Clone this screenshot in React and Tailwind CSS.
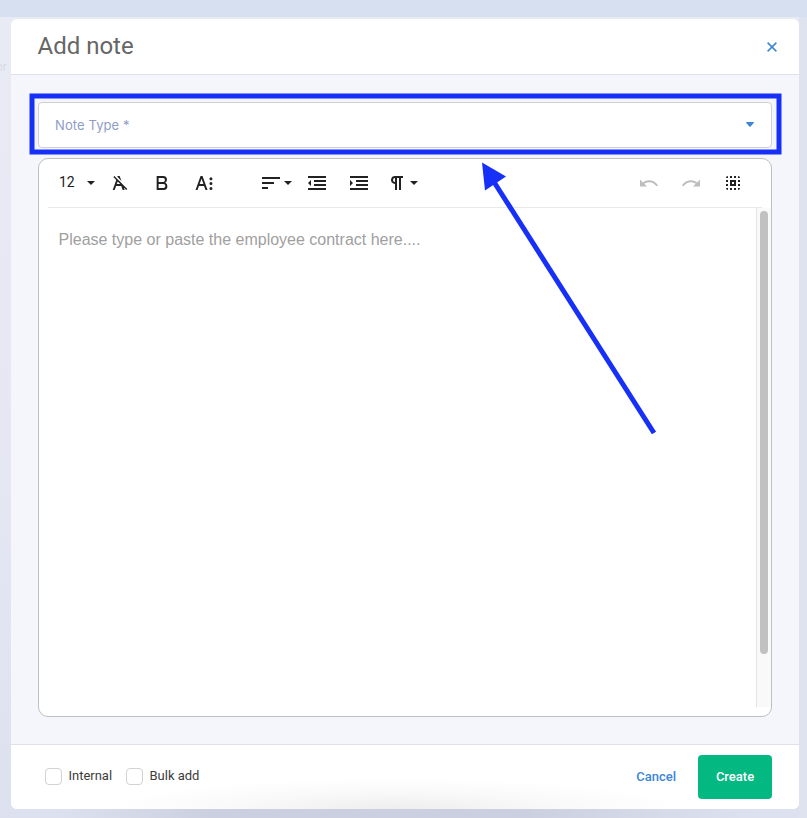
const ICONS = {
  clear: "M11.48,10.09l-1.2-1.21L8.8,7.41,6.43,5,5.37,6.1,8.25,9,4.66,19h2l1.43-4h5.14l1.43,4h2l-.89-2.51L18.27,19l1.07-1.06L14.59,13.2ZM8.8,13l.92-2.56L12.27,13Zm.56-7.15L9.66,5h2l1.75,4.9Z",
  bold: "M15.25,11.8h0A3.68,3.68,0,0,0,17,9a3.93,3.93,0,0,0-3.86-4H6.65V19h7a3.74,3.74,0,0,0,3.7-3.78V15.1A3.64,3.64,0,0,0,15.25,11.8ZM8.65,7h4.2a2.09,2.09,0,0,1,2,1.3,2.09,2.09,0,0,1-1.37,2.61,2.23,2.23,0,0,1-.63.09H8.65Zm4.6,10H8.65V13h4.6a2.09,2.09,0,0,1,2,1.3,2.09,2.09,0,0,1-1.37,2.61A2.23,2.23,0,0,1,13.25,17Z",
  more: "M13.55,19h2l-5-14h-2l-5,14h2l1.4-4h5.1Zm-5.9-6,1.9-5.2L11.45,13Zm12.8,4.5a1.5,1.5,0,1,1-1.5-1.5A1.5,1.5,0,0,1,20.45,17.5Zm0-4.9a1.5,1.5,0,1,1-1.5-1.5A1.5,1.5,0,0,1,20.45,12.6Zm0-4.9a1.5,1.5,0,1,1-1.5-1.5A1.5,1.5,0,0,1,20.45,7.7Z",
  align: "M3,18h6v-2H3V18z M3,6v2h18V6H3z M3,13h12v-2H3V13z",
  outdent: "M3,12l3,3V9L3,12z M3,19h18v-2H3V19z M3,7h18V5H3V7z M9,11h12V9H9V11z M9,15h12v-2H9V15z",
  indent: "M3,9v6l3-3L3,9z M3,19h18v-2H3V19z M3,7h18V5H3V7z M9,11h12V9H9V11z M9,15h12v-2H9V15z",
  paragraph: "M10.15,5A4.11,4.11,0,0,0,6.08,8.18,4,4,0,0,0,10,13v6h2V7h2V19h2V7h2V5ZM8,9a2,2,0,0,1,2-2v4A2,2,0,0,1,8,9Z",
  undo: "M10.4,9.4c-1.7.3-3.3.9-4.6,2L3,8.5v7h7L7.3,12.7c3.7-2.6,8.8-1.8,11.5,1.9.2.2.3.5.5.7l1.8-.9C18.8,10.8,14.6,8.8,10.4,9.4z",
  selectAll: "M5,7h2V5C5.9,5,5,5.9,5,7z M5,11h2V9H5V11z M9,19h2v-2H9V19z M17,5v2h2C19,5.9,18.1,5,17,5z M7,19v-2H5C5,18.1,5.9,19,7,19z M5,15h2v-2H5V15z M11,5H9v2h2V5z M13,19h2v-2h-2V19z M17,11h2V9h-2V11z M17,19c1.1,0,2-0.9,2-2h-2V19z M17,15h2v-2h-2V15z M13,7h2V5h-2V7z M9,15h6V9H9V15z M11,11h2v2h-2V11z",
};

function Icon({ name, className = "" }) {
  return (
    <svg viewBox="0 0 24 24" className={`size-6 shrink-0 fill-current ${className}`}>
      <path fillRule="evenodd" d={ICONS[name]} />
    </svg>
  );
}

function Caret({ className = "" }) {
  return (
    <svg viewBox="0 0 8 4" className={`h-1 w-2 shrink-0 fill-current ${className}`}>
      <path d="M0 0h8L4 4z" />
    </svg>
  );
}

function Checkbox({ label }) {
  return (
    <label className="flex items-center text-[13px] tracking-[-0.02px] text-[#3c3c3c]">
      <span className="mr-[6.5px] size-[17px] rounded-[4px] border border-[#d2d2d2] bg-white" />
      <span>{label}</span>
    </label>
  );
}

function Toolbar() {
  return (
    <div className="mx-[9px] flex h-[49px] items-center border-b border-[#e8e8e8] text-[#222222]">
      <span className="ml-[11px] w-[17px] pb-px text-[14px]">12</span>
      <Caret className="ml-[11px]" />
      <Icon name="clear" className="ml-[13px]" />
      <Icon name="bold" className="ml-[18px]" />
      <Icon name="more" className="ml-[18px]" />
      <Icon name="align" className="ml-[43px]" />
      <Caret className="ml-px" />
      <Icon name="outdent" className="ml-[13px]" />
      <Icon name="indent" className="ml-[18px]" />
      <Icon name="paragraph" className="ml-[14px]" />
      <Caret className="ml-px" />
      <Icon name="undo" className="mr-[18px] ml-auto text-[#bdbdbd]" />
      <Icon name="undo" className="mr-[18px] -scale-x-100 text-[#bdbdbd]" />
      <Icon name="selectAll" className="mr-[17px]" />
    </div>
  );
}

export default function App() {
  return (
    <div className="relative h-[818px] w-[807px] overflow-hidden bg-[linear-gradient(to_bottom,#d7e0f0_17px,#e8ebf4_17px,#e5e8f3_450px,#dde1ef_818px)] pt-[19px] pl-[11px] font-[Roboto,sans-serif]">
      <span className="absolute top-[58px] -left-[4px] text-[12px] text-[#d9dbe3]">or</span>
      <div className="absolute top-[17px] right-0 h-[801px] w-2 bg-[#dfe3f0]" />
      <div className="absolute bottom-0 left-[60px] h-[9px] w-[687px] bg-[linear-gradient(to_right,transparent,#cbcfdf_22%,#cbcfdf_68%,transparent)]" />

      <div className="relative flex h-[790px] w-[788px] flex-col overflow-hidden rounded-[6px] bg-white">
        <header className="flex h-14 items-center justify-between border-b border-[#dfe2ed] pr-[21.5px] pl-[26.5px]">
          <h1 className="pb-0.5 text-[24px] leading-7 text-[#666666]">Add note</h1>
          <svg viewBox="0 0 12 12" className="size-3 fill-none stroke-[#3b86d8] stroke-[1.5]">
            <path d="M1.6 1.6l8.8 8.8M10.4 1.6l-8.8 8.8" />
          </svg>
        </header>

        <main className="flex grow flex-col bg-[#f5f6fb] px-[27px] pt-[27px] pb-[27px]">
          <div className="flex h-[46px] items-center justify-between rounded-[4px] border border-[#d0d0d0] bg-white pr-[17px] pl-4">
            <span className="pt-0.5 font-[Inter,sans-serif] text-[13px] tracking-[0.1px] text-[#8e9dc6]">Note Type *</span>
            <svg viewBox="0 0 8 5" className="mb-px h-[5px] w-2 fill-[#3b86d8]">
              <path d="M0.5 0h7q.7.3.2.9L4.6 4.6q-.6.6-1.2 0L.3.9Q-.2.3.5 0z" />
            </svg>
          </div>
          <div className="mt-[10px] flex grow flex-col rounded-[10px] border border-[#bfbfbf] bg-white">
            <Toolbar />
            <div className="mb-[9px] flex grow justify-between">
              <p className="pt-[21px] pl-[19.5px] font-['Liberation_Sans',sans-serif] text-[16px] leading-[22px] text-[#a0a0a0]">
                Please type or paste the employee contract here....
              </p>
              <div className="flex w-[15px] justify-center border-l border-[#e4e4e4] bg-[#f9f9f9] pt-[3px]">
                <div className="h-[443px] w-2 rounded-full bg-[#c1c1c1]" />
              </div>
            </div>
          </div>
        </main>

        <footer className="flex h-[65px] items-center border-t border-[#dfe2ed] bg-[radial-gradient(ellipse_290px_32px_at_385px_65px,#ededed,#f9f9f9_55%,#ffffff)] pr-[27px] pl-[34px]">
          <div className="flex gap-[14px] pb-0.5">
            <Checkbox label="Internal" />
            <Checkbox label="Bulk add" />
          </div>
          <button className="mr-[22px] ml-auto text-[13px] font-medium text-[#3b86d8]">Cancel</button>
          <button className="h-11 w-[74px] rounded-[4px] bg-[#03b881] text-[13px] font-medium text-white">Create</button>
        </footer>
      </div>

      <svg viewBox="0 0 807 818" className="pointer-events-none absolute inset-0 h-[818px] w-[807px]">
        <rect x="32" y="96" width="747" height="56" fill="none" stroke="#1730f8" strokeWidth="5" />
        <path d="M494 182L654 433" stroke="#1730f8" strokeWidth="5" />
        <path d="M482 162.500L506 176.500L485 190.500z" fill="#1730f8" />
      </svg>
    </div>
  );
}
